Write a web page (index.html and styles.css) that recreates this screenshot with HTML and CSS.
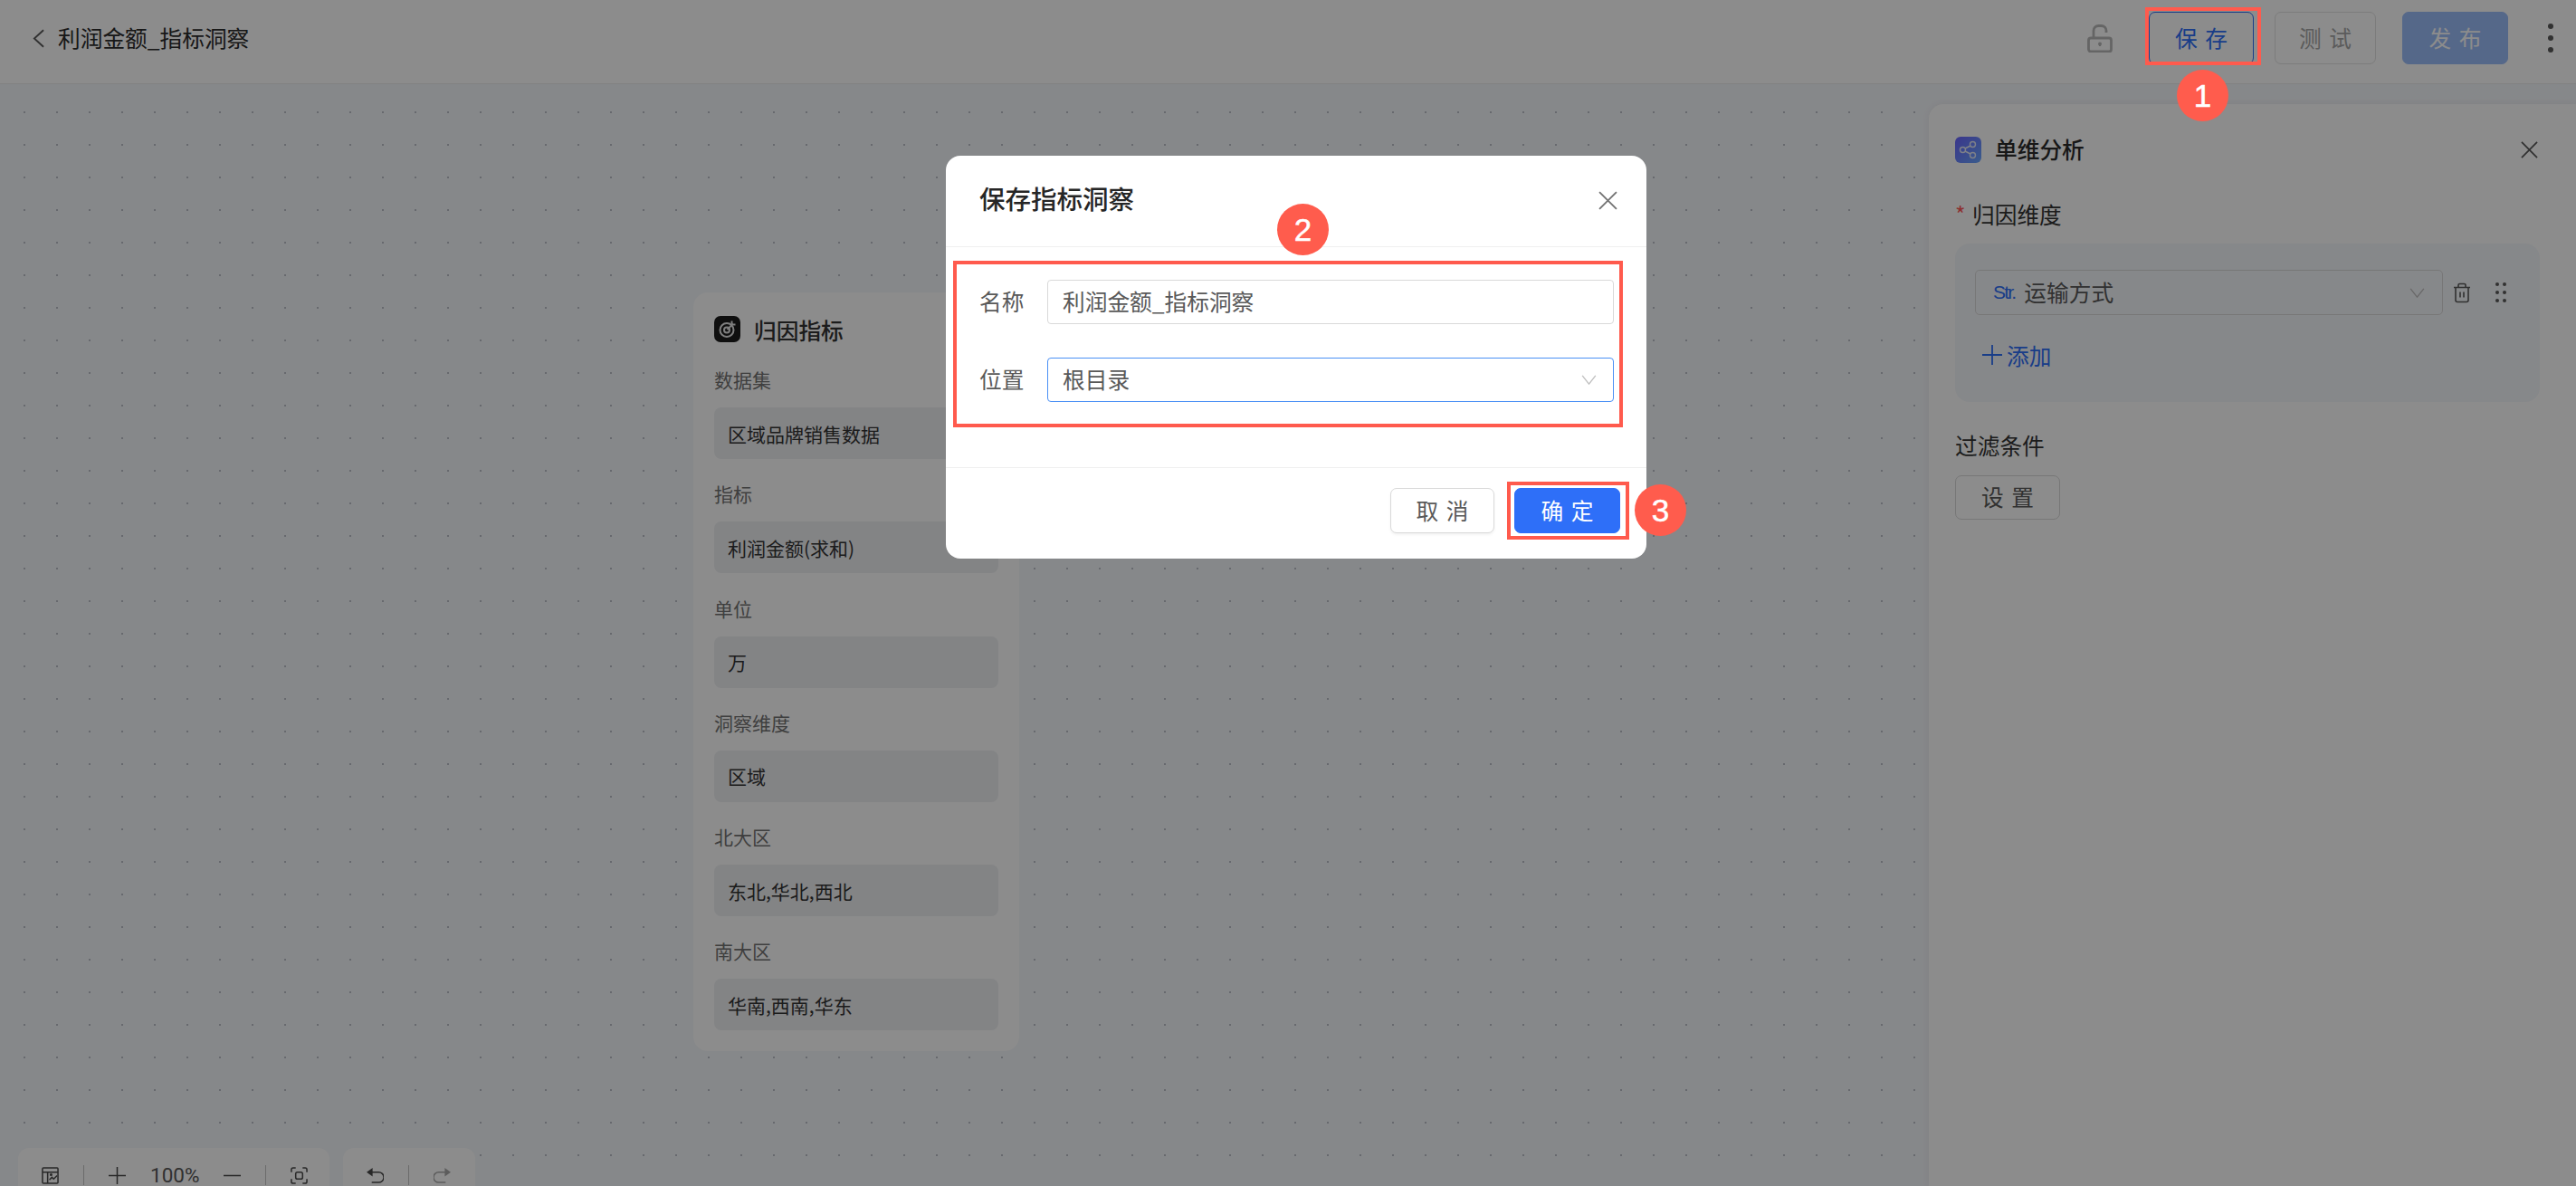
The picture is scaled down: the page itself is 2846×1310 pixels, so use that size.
FILE: index.html
```html
<!DOCTYPE html>
<html lang="zh-CN">
<head>
    <meta charset="UTF-8">
    <meta name="viewport" content="width=device-width, initial-scale=1.0">
    <title>利润金额_指标洞察</title>
    <link rel="stylesheet" href="styles.css">
</head>
<body>
    <header class="topbar">
        <div class="topbar-left">
            <svg class="back-icon" viewBox="0 0 14 22"><path d="M13 1 2 11l11 10"/></svg>
            <span class="page-title">利润金额_指标洞察</span>
        </div>
        <div class="topbar-right">
            <svg class="lock-icon" viewBox="0 0 28 31">
                <path d="M7 15V7a5.500 5.500 0 0 1 5.500-5.500h3A5.500 5.500 0 0 1 21 7v2"/>
                <rect x="1.500" y="15" width="25" height="15" rx="2.500"/>
                <path class="lock-hole" d="M14 21v3"/>
                <circle class="lock-dot" cx="14" cy="21.500" r="2"/>
            </svg>
            <button class="btn btn-save">保 存</button>
            <button class="btn btn-test">测 试</button>
            <button class="btn btn-publish">发 布</button>
            <div class="more-dots"><i></i><i></i><i></i></div>
        </div>
    </header>

    <main class="canvas">
        <!-- node on the canvas -->
        <section class="node-card">
            <div class="node-head">
                <svg class="node-icon" viewBox="0 0 29 29">
                    <rect width="29" height="29" rx="7" fill="#1c1c1c"/>
                    <circle cx="14" cy="15.500" r="7.500" fill="none" stroke="#e8e8e8" stroke-width="2"/>
                    <circle cx="14" cy="15.500" r="3" fill="none" stroke="#e8e8e8" stroke-width="2"/>
                    <path d="M14.500 15 21 8.500M19.500 5.500v4h4" fill="none" stroke="#e8e8e8" stroke-width="2"/>
                </svg>
                <span class="node-title">归因指标</span>
            </div>
            <div class="node-label">数据集</div>
            <div class="node-field">区域品牌销售数据</div>
            <div class="node-label">指标</div>
            <div class="node-field">利润金额(求和)</div>
            <div class="node-label">单位</div>
            <div class="node-field">万</div>
            <div class="node-label">洞察维度</div>
            <div class="node-field">区域</div>
            <div class="node-label">北大区</div>
            <div class="node-field">东北,华北,西北</div>
            <div class="node-label">南大区</div>
            <div class="node-field">华南,西南,华东</div>
        </section>

        <div class="toolbar toolbar-zoom">
            <svg class="tool-icon" viewBox="0 0 20 20">
                <rect x="1" y="1" width="18" height="18" rx="1"/>
                <path d="M1 6h18M7 6v13M9 15l3-3 2 2 4-4"/>
                <circle cx="11" cy="9" r=".8"/>
            </svg>
            <span class="tool-sep"></span>
            <svg class="tool-icon" viewBox="0 0 20 20"><path d="M10 0v20M0 10h20"/></svg>
            <span class="zoom-value">100%</span>
            <svg class="tool-icon" viewBox="0 0 20 20"><path d="M0 10h20"/></svg>
            <span class="tool-sep"></span>
            <svg class="tool-icon" viewBox="0 0 20 20">
                <path d="M1 6V3a2 2 0 0 1 2-2h3M14 1h3a2 2 0 0 1 2 2v3M19 14v3a2 2 0 0 1-2 2h-3M6 19H3a2 2 0 0 1-2-2v-3"/>
                <rect x="6" y="6" width="8" height="8" rx="2"/>
            </svg>
        </div>
        <div class="toolbar toolbar-history">
            <svg class="tool-icon" viewBox="0 0 20 20">
                <path d="M5 6h9a5 5 0 0 1 0 12H6"/>
                <path class="tool-fill" d="M7 1v10L0 6z"/>
            </svg>
            <span class="tool-sep"></span>
            <svg class="tool-icon tool-off" viewBox="0 0 20 20">
                <path d="M15 6H6a5 5 0 0 0 0 12h8"/>
                <path class="tool-fill" d="M13 1v10l7-5z"/>
            </svg>
        </div>

        <!-- side panel -->
        <aside class="side-panel">
            <div class="panel-head">
                <svg class="panel-icon" viewBox="0 0 29 29">
                    <defs>
                        <linearGradient id="panelGrad" x1="0" y1="0" x2="1" y2="1">
                            <stop offset="0" stop-color="#6a63ff"/>
                            <stop offset="1" stop-color="#6aa8ff"/>
                        </linearGradient>
                    </defs>
                    <rect width="29" height="29" rx="6" fill="url(#panelGrad)"/>
                    <g fill="none" stroke="#e8ecf8" stroke-width="1.400">
                        <circle cx="8.500" cy="14.500" r="3"/>
                        <circle cx="19.500" cy="8.500" r="3"/>
                        <circle cx="19.500" cy="20.500" r="3"/>
                        <path d="M11 13l6-3M11 16l6 3"/>
                    </g>
                </svg>
                <span class="panel-title">单维分析</span>
                <svg class="close-icon" viewBox="0 0 20 20"><path d="M1 1l18 18M19 1 1 19"/></svg>
            </div>
            <div class="panel-label"><span class="required">*</span>归因维度</div>
            <div class="dim-group">
                <div class="dim-row">
                    <div class="dim-select">
                        <span class="dim-type">Str.</span>
                        <span class="dim-name">运输方式</span>
                        <svg class="chevron-icon" viewBox="0 0 18 12"><path d="M1 1l8 10 8-10"/></svg>
                    </div>
                    <svg class="trash-icon" viewBox="0 0 20 22">
                        <path d="M1 5h18M6 5V2.500A1.500 1.500 0 0 1 7.500 1h5A1.500 1.500 0 0 1 14 2.500V5M3 5v14a2 2 0 0 0 2 2h10a2 2 0 0 0 2-2V5M8 10v6M12 10v6"/>
                    </svg>
                    <svg class="drag-icon" viewBox="0 0 12 22">
                        <circle cx="2" cy="2" r="2"/><circle cx="10" cy="2" r="2"/>
                        <circle cx="2" cy="11" r="2"/><circle cx="10" cy="11" r="2"/>
                        <circle cx="2" cy="20" r="2"/><circle cx="10" cy="20" r="2"/>
                    </svg>
                </div>
                <div class="dim-add">
                    <svg class="add-icon" viewBox="0 0 22 22"><path d="M11 0v22M0 11h22"/></svg>
                    <span>添加</span>
                </div>
            </div>
            <div class="panel-label panel-label-filter">过滤条件</div>
            <button class="btn btn-setting">设 置</button>
        </aside>
    </main>

    <div class="mask"></div>

    <div class="dialog">
        <div class="dialog-head">
            <span class="dialog-title">保存指标洞察</span>
            <svg class="dialog-close" viewBox="0 0 20 20"><path d="M1 1l18 18M19 1 1 19"/></svg>
        </div>
        <div class="dialog-body">
            <div class="form-row">
                <label class="form-label">名称</label>
                <div class="form-input">利润金额_指标洞察</div>
            </div>
            <div class="form-row">
                <label class="form-label">位置</label>
                <div class="form-input form-select">
                    <span class="form-value">根目录</span>
                    <svg class="chevron-icon dialog-chevron" viewBox="0 0 18 12"><path d="M1 1l8 10 8-10"/></svg>
                </div>
            </div>
        </div>
        <div class="dialog-foot">
            <button class="btn btn-cancel">取 消</button>
            <button class="btn btn-ok">确 定</button>
        </div>
    </div>

    <!-- annotations drawn over the shot -->
    <div class="mark-box mark-box-1"></div>
    <div class="mark-box mark-box-2"></div>
    <div class="mark-box mark-box-3"></div>
    <div class="mark-num mark-num-1">1</div>
    <div class="mark-num mark-num-2">2</div>
    <div class="mark-num mark-num-3">3</div>
</body>
</html>
```

FILE: styles.css
```css
* {
    box-sizing: border-box;
}

body {
    margin: 0;
    height: 100vh;
    display: flex;
    flex-direction: column;
    position: relative;
    overflow: hidden;
    font-family: "Noto Sans CJK SC", "Liberation Sans", sans-serif;
    font-size: 24.7px;
    line-height: 30px;
    color: #333;
    background-color: #fff;
}

svg {
    display: block;
    flex-shrink: 0;
}

.btn {
    font-family: inherit;
    font-size: 24.7px;
    word-spacing: 3px;
    height: 49px;
    width: 116px;
    padding: 0 0 3px;
    background-color: #fff;
    border: 1px solid #d9d9d9;
    border-radius: 7px;
    color: #595959;
}

/* top bar */
.topbar {
    height: 93px;
    flex-shrink: 0;
    display: flex;
    align-items: center;
    justify-content: space-between;
    padding: 0 25px 8px 36px;
    background-color: #fff;
    border-bottom: 1px solid #ececec;
}

.topbar-left {
    display: flex;
    align-items: center;
    gap: 15px;
}

.back-icon {
    width: 13px;
    height: 21px;
    fill: none;
    stroke: #595959;
    stroke-width: 2;
}

.page-title {
    padding-bottom: 3px;
    color: #2b2b2b;
}

.topbar-right {
    display: flex;
    align-items: center;
}

.lock-icon {
    width: 28px;
    height: 31px;
    margin-right: 40px;
    fill: none;
    stroke: #b8b8b8;
    stroke-width: 2.800;
}

.lock-hole {
    stroke-width: 2;
}

.lock-dot {
    fill: #b8b8b8;
    stroke: none;
}

.topbar .btn {
    height: 58px;
}

.btn-save {
    color: #2e6ff8;
    border-color: #2e6ff8;
    margin-right: 23px;
}

.btn-test {
    width: 112px !important;
    color: #a6a6a6;
    border-color: #e2e2e2;
    margin-right: 29px;
}

.btn-publish {
    width: 117px !important;
    color: #fff;
    background-color: #9cbdfa;
    border-color: #9cbdfa;
    margin-right: 44px;
}

.more-dots {
    display: flex;
    flex-direction: column;
    gap: 7px;
}

.more-dots i {
    width: 6px;
    height: 6px;
    border-radius: 50%;
    background-color: #595959;
}

/* canvas */
.canvas {
    flex: 1;
    position: relative;
    overflow: hidden;
    background-color: #f5f7fb;
    background-image: radial-gradient(circle, #bcc0c8 1px, transparent 1.200px);
    background-size: 36px 36px;
    background-position: 9px 13px;
}

.node-card {
    position: absolute;
    left: 766px;
    top: 230px;
    width: 360px;
    height: 838px;
    padding: 26px 23px 0;
    background-color: #fff;
    border-radius: 16px;
}

.node-head {
    height: 29px;
    display: flex;
    align-items: center;
    gap: 15px;
    margin-bottom: 26px;
}

.node-icon {
    width: 29px;
    height: 29px;
}

.node-title {
    font-weight: 500;
    color: #333;
}

.node-label {
    font-size: 21px;
    line-height: 30px;
    margin-bottom: 16px;
    color: #737373;
}

.node-field {
    height: 57px;
    display: flex;
    align-items: center;
    padding-left: 15px;
    margin-bottom: 23.300px;
    font-size: 21px;
    color: #333;
    background-color: #eff0f3;
    border-radius: 8px;
}

.toolbar {
    position: absolute;
    top: 1175px;
    height: 60px;
    display: flex;
    align-items: flex-start;
    gap: 27px;
    padding: 21px 0 0 26px;
    background-color: #fff;
    border-radius: 12px;
}

.toolbar-zoom {
    left: 20px;
    width: 344px;
}

.toolbar-history {
    left: 379px;
    width: 146px;
}

.tool-icon {
    width: 19px;
    height: 19px;
    fill: none;
    stroke: #4a4a4a;
    stroke-width: 1.600;
}

.tool-fill {
    fill: #4a4a4a;
    stroke: none;
}

.tool-off {
    stroke: #a8a8a8;
}

.tool-off .tool-fill {
    fill: #a8a8a8;
}

.tool-sep {
    width: 1px;
    height: 22px;
    margin-top: -2px;
    background-color: #c4c4c4;
}

.zoom-value {
    width: 54px;
    font-family: Roboto, sans-serif;
    font-size: 22.500px;
    line-height: 18px;
    color: #595959;
}

/* side panel */
.side-panel {
    position: absolute;
    left: 2131px;
    right: 0;
    top: 22px;
    bottom: 0;
    padding: 36px 40px 0 29px;
    background-color: #fff;
    border-top-left-radius: 16px;
    box-shadow: 0 0 8px rgba(0, 0, 0, 0.06);
}

.panel-head {
    height: 29px;
    display: flex;
    align-items: center;
    gap: 15px;
    margin-bottom: 41px;
}

.panel-icon {
    width: 29px;
    height: 29px;
}

.panel-title {
    padding-bottom: 3px;
    font-weight: 500;
    color: #2b2b2b;
}

.close-icon {
    width: 19px;
    height: 19px;
    margin-left: auto;
    margin-right: 2px;
    fill: none;
    stroke: #595959;
    stroke-width: 1.800;
}

.panel-label {
    line-height: 30px;
    margin-bottom: 18px;
    color: #333;
}

.panel-label-filter {
    margin-top: 32px;
    margin-bottom: 19px;
}

.required {
    display: inline-block;
    width: 19px;
    color: #ff5a5a;
}

.dim-group {
    height: 175px;
    padding: 29px 22px 0;
    background-color: #f5f7fb;
    border-radius: 16px;
}

.dim-row {
    display: flex;
    align-items: center;
}

.dim-select {
    width: 517px;
    height: 50px;
    display: flex;
    align-items: center;
    padding: 0 19px;
    background-color: #f5f7fb;
    border: 1px solid #d9d9d9;
    border-radius: 5px;
    color: #595959;
}

.dim-type {
    font-family: "Liberation Sans", sans-serif;
    font-size: 21px;
    letter-spacing: -1.800px;
    margin-right: 10px;
    color: #2e6ff8;
}

.dim-name {
    padding-bottom: 2px;
}

.chevron-icon {
    width: 17px;
    height: 11px;
    margin-left: auto;
    fill: none;
    stroke: #bfbfbf;
    stroke-width: 1.500;
}

.trash-icon {
    width: 20px;
    height: 23px;
    margin-left: 11px;
    fill: none;
    stroke: #595959;
    stroke-width: 1.600;
}

.drag-icon {
    width: 12px;
    height: 22px;
    margin-left: 27px;
    fill: #595959;
}

.dim-add {
    display: flex;
    align-items: center;
    gap: 5px;
    height: 30px;
    margin: 29px 0 0 8px;
    color: #2e6ff8;
}

.add-icon {
    width: 22px;
    height: 22px;
    fill: none;
    stroke: #2e6ff8;
    stroke-width: 1.800;
}

/* dialog */
.mask {
    position: absolute;
    inset: 0;
    background-color: rgba(0, 0, 0, 0.45);
}

.dialog {
    position: absolute;
    left: 1045px;
    top: 172px;
    width: 774px;
    height: 445px;
    display: flex;
    flex-direction: column;
    background-color: #fff;
    border-radius: 16px;
}

.dialog-head {
    height: 101px;
    display: flex;
    justify-content: space-between;
    padding: 32px 32px 0 37px;
    border-bottom: 1px solid #efefef;
}

.dialog-title {
    font-size: 28.500px;
    font-weight: 500;
    color: #262626;
}

.dialog-close {
    width: 21px;
    height: 21px;
    margin-top: 7px;
    fill: none;
    stroke: #737373;
    stroke-width: 1.800;
}

.dialog-body {
    flex: 1;
    display: flex;
    flex-direction: column;
    gap: 37px;
    padding: 36px 36px 0 37px;
}

.form-row {
    display: flex;
    align-items: center;
}

.form-label {
    width: 75px;
    padding-bottom: 3px;
    color: #595959;
}

.form-input {
    flex: 1;
    height: 49px;
    display: flex;
    align-items: center;
    padding: 0 18px 3px 16px;
    border: 1px solid #d9d9d9;
    border-radius: 4px;
    color: #595959;
}

.form-select {
    padding-bottom: 0;
    border-color: #4a90f5;
}

.form-value {
    padding-bottom: 3px;
}

.dialog-foot {
    height: 101px;
    display: flex;
    justify-content: flex-end;
    gap: 22px;
    padding: 22px 29px 0 0;
    border-top: 1px solid #efefef;
}

.btn-cancel {
    width: 115px;
    height: 50px;
    box-shadow: 0 2px 3px rgba(0, 0, 0, 0.05);
}

.btn-ok {
    width: 117px;
    height: 50px;
    color: #fff;
    background-color: #2e6ff8;
    border-color: #2e6ff8;
}

/* annotations */
.mark-box {
    position: absolute;
    border: 4px solid #ff5a4d;
}

.mark-box-1 {
    left: 2370px;
    top: 8px;
    width: 128px;
    height: 64px;
}

.mark-box-2 {
    left: 1053px;
    top: 288px;
    width: 740px;
    height: 184px;
}

.mark-box-3 {
    left: 1665px;
    top: 532px;
    width: 135px;
    height: 64px;
}

.mark-num {
    position: absolute;
    width: 57px;
    height: 57px;
    display: flex;
    align-items: center;
    justify-content: center;
    border-radius: 50%;
    font-family: "Liberation Sans", sans-serif;
    font-size: 35px;
    color: #fff;
    -webkit-text-stroke: 0.5px #fff;
    background-color: #ff5c4d;
}

.mark-num-1 {
    left: 2405px;
    top: 77px;
}

.mark-num-2 {
    left: 1411px;
    top: 225px;
}

.mark-num-3 {
    left: 1806px;
    top: 535px;
}
```
